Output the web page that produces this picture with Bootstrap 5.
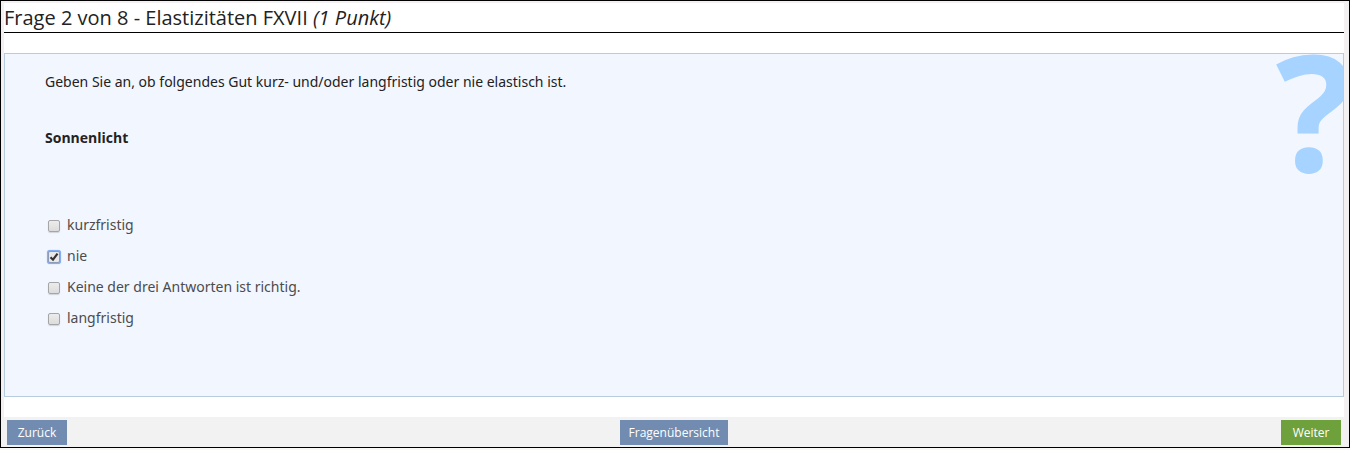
<!DOCTYPE html>
<html lang="de">
<head>
<meta charset="utf-8">
<meta name="viewport" content="width=device-width, initial-scale=1">
<title>Frage 2 von 8</title>
<link href="https://cdn.jsdelivr.net/npm/bootstrap@5.3.0/dist/css/bootstrap.min.css" rel="stylesheet">
<style>
body { font-family: "Open Sans", sans-serif; font-size: 14px; line-height: 20px; color: #222; background: #f9f9f7; }
.quiz-frame { border: 1px solid #000; padding: 2px 5px 0 3px; background: #f2f0f0; }
.quiz-title { font-size: 20px; line-height: 28px; padding-top: 1px; border-bottom: 1px solid #000; color: #222; }
.quiz-panel { background: #f2f6ff; border: 1px solid #b8cce0; padding: 18px 40px 68px; }
.quiz-mark { top: -26px; right: -10px; font-size: 162px; line-height: 162px; font-weight: 700; color: #a6d3ff; }
.quiz-text, .quiz-options { font-family: "Noto Sans", sans-serif; }
.quiz-term { margin: 36px 0 67px; }
.quiz-options { gap: 11px; color: #4c4c4c; }
.quiz-options .quiz-check { appearance: none; width: 12px; height: 12px; margin: 2px 7px 0 3px; border: 1px solid #a5a5a5; border-radius: 2px; background: linear-gradient(#ececec, #dcdcdc); box-shadow: 0 1px 1px #d0d4dc; }
.quiz-options .quiz-check:checked { border-color: #8c9cb8; box-shadow: 0 0 0 1px #84adf2, 0 0 1px 1px #84adf2; background: url("data:image/svg+xml,%3Csvg xmlns='http://www.w3.org/2000/svg' viewBox='0 0 10 10'%3E%3Cpath d='M1.5 5.2 4 7.7 8.5 1.7' fill='none' stroke='%23333' stroke-width='2.2'/%3E%3C/svg%3E") center/10px no-repeat, #e8e8e8; }
.quiz-nav { background: #f2f2f2; padding: 3px 3px 2px; }
.quiz-btn { --bs-btn-color: #fff; --bs-btn-hover-color: #fff; --bs-btn-bg: #718cb0; --bs-btn-hover-bg: #5f7ca3; min-width: 60px; font-size: 12px; line-height: 17px; padding: 4px 9px; border: 0; border-radius: 0; }
.quiz-btn-next { --bs-btn-bg: #6ea03c; --bs-btn-hover-bg: #5c8b2e; }
</style>
</head>
<body>
<main class="quiz-frame">
  <form class="bg-white">
    <h1 class="quiz-title fw-normal mb-0">Frage 2 von 8 - Elastizitäten FXVII <em>(1 Punkt)</em></h1>
    <div class="py-1"><section class="quiz-panel position-relative overflow-hidden my-3">
      <span class="quiz-mark position-absolute" aria-hidden="true">?</span>
      <p class="quiz-text mb-0">Geben Sie an, ob folgendes Gut kurz- und/oder langfristig oder nie elastisch ist.</p>
      <p class="quiz-term fw-bold">Sonnenlicht</p>
      <div class="quiz-options d-flex flex-column align-items-start">
        <label class="d-flex align-items-center"><input class="quiz-check" type="checkbox">kurzfristig</label>
        <label class="d-flex align-items-center"><input class="quiz-check" type="checkbox" checked>nie</label>
        <label class="d-flex align-items-center"><input class="quiz-check" type="checkbox">Keine der drei Antworten ist richtig.</label>
        <label class="d-flex align-items-center"><input class="quiz-check" type="checkbox">langfristig</label>
      </div>
    </section></div>
    <nav class="quiz-nav d-flex">
      <div class="col text-start"><button type="button" class="btn quiz-btn">Zurück</button></div>
      <button type="button" class="btn quiz-btn">Fragenübersicht</button>
      <div class="col text-end"><button type="button" class="btn quiz-btn quiz-btn-next">Weiter</button></div>
    </nav>
  </form>
</main>
<script src="https://cdn.jsdelivr.net/npm/bootstrap@5.3.0/dist/js/bootstrap.bundle.min.js"></script>
</body>
</html>
